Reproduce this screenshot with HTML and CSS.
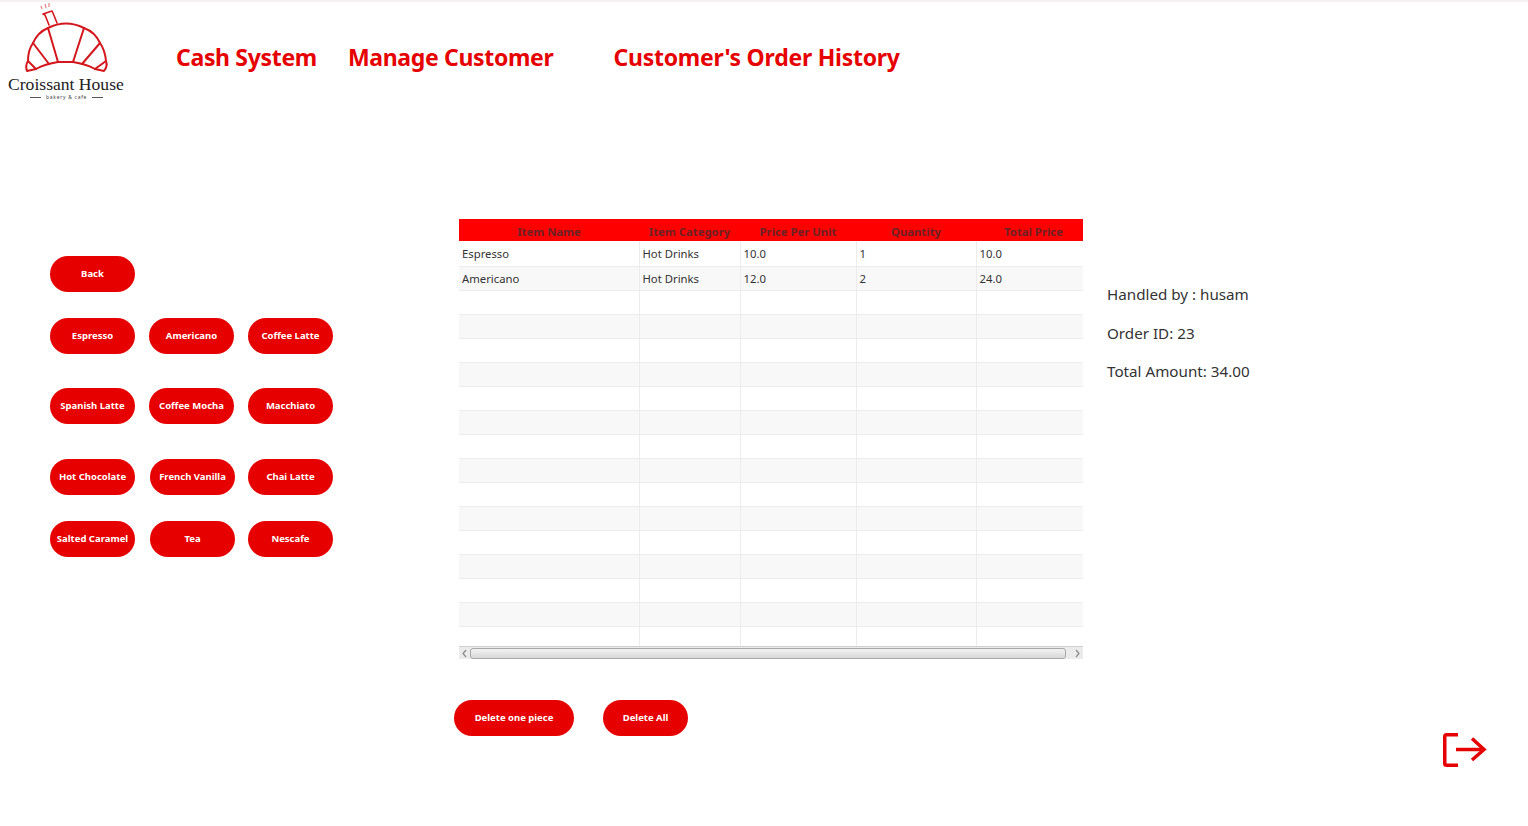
FILE: index.html
```html
<!DOCTYPE html>
<html lang="en">
<head>
  <meta charset="UTF-8">
  <title>Croissant House - Cash System</title>
  <meta name="viewport" content="width=device-width, initial-scale=1.0">
  <link rel="stylesheet" href="styles.css">
</head>
<body>

  <header class="topbar">
    <div class="logo">
      <svg class="logo-mark" width="134" height="76" viewBox="0 0 134 76" fill="none">
        <g stroke="#d3171c" stroke-width="2" stroke-linejoin="round" stroke-linecap="round">
          <path d="M48 28 Q66 19 84 28 Q95 32 100 43 Q105 50 106 61 Q108 66 104 71 L95 69 Q86 64 73 62 L58 62 Q45 64 36 69 L27 71 Q25 66 28 61 Q28 50 33 43 Q38 32 48 28 Z"/>
          <path d="M48 28 L58 62"/>
          <path d="M84 28 L73 62"/>
          <path d="M33 43 L49 64"/>
          <path d="M100 43 L82 64"/>
          <path d="M28 61 L36 69"/>
          <path d="M106 61 L95 69"/>
          <path d="M49 25 L45 15 L43 14 L52 11 L53 13 L57 23" stroke-width="1.6"/>
        </g>
        <path d="M41 6 l1 3 M45 4 l1 4 M49 3 l0 4" stroke="#e58a8c" stroke-width="1.3"/>
      </svg>
      <div class="logo-name">Croissant House</div>
      <div class="logo-sub"><span class="logo-rule"></span>bakery &amp; cafe<span class="logo-rule"></span></div>
    </div>
    <nav class="nav">
      <a class="nav-link">Cash System</a>
      <a class="nav-link">Manage Customer</a>
      <a class="nav-link nav-last">Customer's Order History</a>
    </nav>
  </header>

  <main class="main">
    <section class="menu">
      <div class="row">
        <button class="btn">Back</button>
      </div>
      <div class="row row-1">
        <button class="btn">Espresso</button>
        <button class="btn">Americano</button>
        <button class="btn">Coffee Latte</button>
      </div>
      <div class="row row-2">
        <button class="btn">Spanish Latte</button>
        <button class="btn">Coffee Mocha</button>
        <button class="btn">Macchiato</button>
      </div>
      <div class="row row-3 row-shift">
        <button class="btn">Hot Chocolate</button>
        <button class="btn">French Vanilla</button>
        <button class="btn">Chai Latte</button>
      </div>
      <div class="row row-1 row-shift">
        <button class="btn">Salted Caramel</button>
        <button class="btn">Tea</button>
        <button class="btn">Nescafe</button>
      </div>
    </section>

    <section class="order">
      <div class="table-wrap">
        <table class="table">
          <colgroup>
            <col class="col-name">
            <col class="col-cat">
            <col class="col-price">
            <col class="col-qty">
            <col class="col-total">
          </colgroup>
          <thead>
            <tr>
              <th>Item Name</th>
              <th>Item Category</th>
              <th>Price Per Unit</th>
              <th>Quantity</th>
              <th>Total Price</th>
            </tr>
          </thead>
          <tbody>
            <tr class="row-first"><td>Espresso</td><td>Hot Drinks</td><td>10.0</td><td>1</td><td>10.0</td></tr>
            <tr><td>Americano</td><td>Hot Drinks</td><td>12.0</td><td>2</td><td>24.0</td></tr>
            <tr><td></td><td></td><td></td><td></td><td></td></tr>
            <tr><td></td><td></td><td></td><td></td><td></td></tr>
            <tr><td></td><td></td><td></td><td></td><td></td></tr>
            <tr><td></td><td></td><td></td><td></td><td></td></tr>
            <tr><td></td><td></td><td></td><td></td><td></td></tr>
            <tr><td></td><td></td><td></td><td></td><td></td></tr>
            <tr><td></td><td></td><td></td><td></td><td></td></tr>
            <tr><td></td><td></td><td></td><td></td><td></td></tr>
            <tr><td></td><td></td><td></td><td></td><td></td></tr>
            <tr><td></td><td></td><td></td><td></td><td></td></tr>
            <tr><td></td><td></td><td></td><td></td><td></td></tr>
            <tr><td></td><td></td><td></td><td></td><td></td></tr>
            <tr><td></td><td></td><td></td><td></td><td></td></tr>
            <tr><td></td><td></td><td></td><td></td><td></td></tr>
            <tr class="row-cut"><td></td><td></td><td></td><td></td><td></td></tr>
          </tbody>
        </table>
        <div class="scrollbar">
          <svg width="11" height="11" viewBox="0 0 11 11" fill="none"><path d="M7 2 L4 5.5 L7 9" stroke="#8a8a8a" stroke-width="1.2"/></svg>
          <div class="thumb"></div>
          <svg width="11" height="11" viewBox="0 0 11 11" fill="none"><path d="M4 2 L7 5.5 L4 9" stroke="#8a8a8a" stroke-width="1.2"/></svg>
        </div>
      </div>
      <div class="actions">
        <button class="btn btn-wide">Delete one piece</button>
        <button class="btn">Delete All</button>
      </div>
    </section>

    <aside class="info">
      <p class="info-line">Handled by : husam</p>
      <p class="info-line">Order ID: 23</p>
      <p class="info-line">Total Amount: 34.00</p>
      <svg class="logout" width="44" height="34" viewBox="0 0 44 34" fill="none" stroke="#e60000" stroke-width="3.5">
        <path d="M15 1.75 H3.500 Q1.75 1.75 1.75 3.500 V30.500 Q1.75 32.250 3.500 32.250 H15"/>
        <path d="M13 16.500 H41"/>
        <path d="M29 5.500 L41 16.500 L29 27"/>
      </svg>
    </aside>
  </main>

</body>
</html>
```

FILE: styles.css
```css
:root {
  --red: #e60000;
  --line: #ececec;
}

body {
  margin: 0;
  background: white;
  font-family: 'Noto Sans', 'Open Sans', sans-serif;
  color: #333;
  overflow: hidden;
}

.topbar {
  height: 103px;
  border-top: 2px solid #f6f0f3;
  display: flex;
  align-items: flex-start;
}

.logo {
  width: 134px;
  height: 103px;
  flex-shrink: 0;
}

.logo-mark {
  display: block;
  margin-top: -2px;
}

.logo-name {
  margin: -2px 0 0 8px;
  font-family: 'Liberation Serif', serif;
  font-size: 17.6px;
  line-height: 20px;
  color: #222;
  white-space: nowrap;
}

.logo-sub {
  margin: 0 0 0 30px;
  display: flex;
  align-items: center;
  gap: 5px;
  font-size: 5px;
  letter-spacing: 0.7px;
  line-height: 6px;
  color: #444;
  white-space: nowrap;
}

.logo-rule {
  width: 11px;
  height: 1px;
  background: #555;
}

.nav {
  display: flex;
  gap: 31px;
  margin: 37px 0 0 42px;
}

.nav-link {
  font-size: 23px;
  letter-spacing: -0.33px;
  line-height: 36px;
  font-weight: bold;
  color: var(--red);
  white-space: nowrap;
}

.nav-last {
  margin-left: 29px;
  letter-spacing: -0.25px;
}

.main {
  height: 721px;
  display: flex;
}

.menu {
  width: 454px;
  padding: 151px 0 0 50px;
  box-sizing: border-box;
  flex-shrink: 0;
}

.row {
  display: flex;
  gap: 14px;
}

.row-1 {
  margin-top: 26px;
}

.row-2 {
  margin-top: 34px;
}

.row-3 {
  margin-top: 35px;
}

.row-shift .btn:nth-child(2) {
  margin: 0 -1px 0 1px;
}

.btn {
  width: 85px;
  height: 36px;
  padding: 0 0 1px;
  border: none;
  border-radius: 18px;
  background: var(--red);
  color: white;
  font-family: 'Noto Sans', 'Open Sans', sans-serif;
  font-size: 9.5px;
  font-weight: bold;
  white-space: nowrap;
}

.btn-wide {
  width: 120px;
}

.order {
  width: 629px;
  padding-top: 114px;
  box-sizing: border-box;
  flex-shrink: 0;
}

.table-wrap {
  width: 624px;
  margin-left: 5px;
  overflow: hidden;
}

.table {
  width: 632px;
  table-layout: fixed;
  border-collapse: collapse;
  font-size: 11.3px;
}

.col-name { width: 180px; }
.col-cat { width: 101px; }
.col-price { width: 116px; }
.col-qty { width: 120px; }
.col-total { width: 115px; }

.table th {
  height: 22px;
  padding: 3px 0 0;
  box-sizing: border-box;
  background: #ff0000;
  color: #6b2226;
  font-weight: bold;
  text-align: center;
  line-height: 19px;
}

.table td {
  height: 24px;
  padding: 1px 3px 0;
  box-sizing: border-box;
  border-right: 1px solid var(--line);
  border-bottom: 1px solid var(--line);
  line-height: 22px;
}

.table .row-first td {
  height: 25px;
}

.table tbody tr:nth-child(even) {
  background: #f8f8f8;
}

.table .row-cut td {
  height: 20px;
  border-bottom: none;
}

.scrollbar {
  height: 13px;
  display: flex;
  align-items: center;
  box-sizing: border-box;
  background: #ebebeb;
  border-top: 1px solid #cfcfcf;
}

.thumb {
  flex: 1;
  height: 9px;
  margin: 0 6px 0 0;
  border: 1px solid #a8a8a8;
  border-radius: 3px;
  background: linear-gradient(#f2f2f2, #d8d8d8);
}

.actions {
  display: flex;
  gap: 29px;
  margin-top: 41px;
}

.info {
  flex: 1;
  margin-left: 24px;
  padding-top: 178px;
  display: flex;
  flex-direction: column;
}

.info-line {
  margin: 0 0 16.5px;
  font-size: 15.2px;
  line-height: 22px;
}

.logout {
  margin: auto 41px 59px 0;
  align-self: flex-end;
}
```
